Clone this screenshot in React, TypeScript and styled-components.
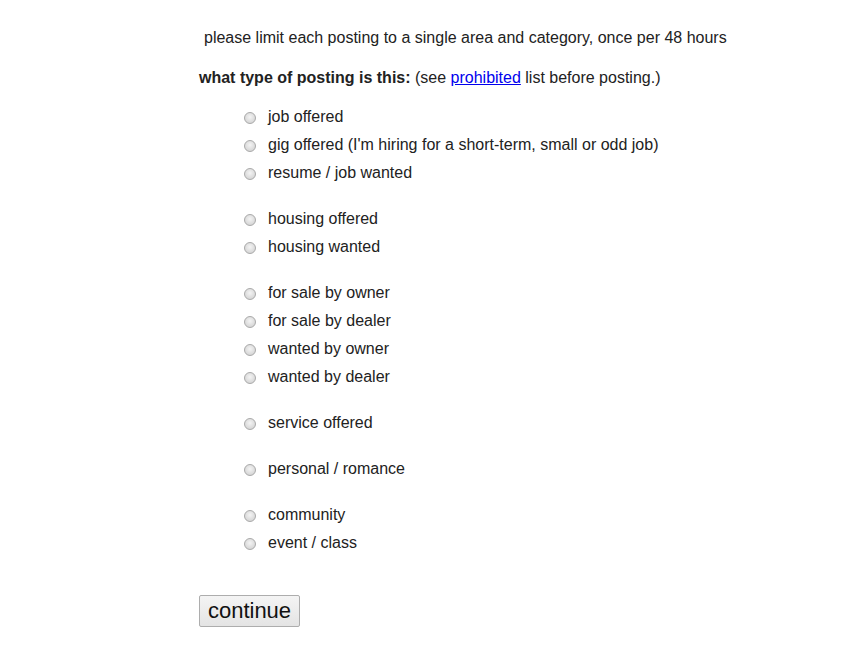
import styled, { createGlobalStyle } from "styled-components"

const GlobalStyle = createGlobalStyle`
    body {
        margin: 0;
        background: #ffffff;
        font-family: "Liberation Sans", Arial, sans-serif;
        color: #222222;
    }
`

const groups: string[][] = [
    ["job offered", "gig offered (I'm hiring for a short-term, small or odd job)", "resume / job wanted"],
    ["housing offered", "housing wanted"],
    ["for sale by owner", "for sale by dealer", "wanted by owner", "wanted by dealer"],
    ["service offered"],
    ["personal / romance"],
    ["community", "event / class"],
]

const Page = styled.div`
    padding: 28px 0 40px 199px;
    font-size: 16px;
`

const Notice = styled.div`
    line-height: 20px;
    padding-left: 5px;
`

const Question = styled.div`
    line-height: 20px;
    margin-top: 20px;

    b {
        font-weight: bold;
    }
    a {
        color: #0000ee;
        text-decoration: underline;
    }
`

const Options = styled.div`
    margin-top: 15px;
    padding-left: 45px;
`

const Group = styled.div`
    margin-bottom: 18px;
`

const Row = styled.label`
    display: flex;
    align-items: center;
    gap: 12px;
    height: 28px;
    line-height: 20px;
`

const Radio = styled.input`
    appearance: none;
    margin: 2px 0 0 0;
    width: 12px;
    height: 12px;
    border-radius: 50%;
    border: 1px solid #a9a9a9;
    background: radial-gradient(circle at 50% 40%, #f4f4f4 0%, #dcdcdc 60%, #cfcfcf 100%);
    box-sizing: border-box;
`

const Continue = styled.button`
    margin-top: 20px;
    height: 32px;
    width: 101px;
    padding: 0;
    font-family: "Liberation Sans", Arial, sans-serif;
    font-size: 22px;
    color: #111111;
    background: linear-gradient(#f4f4f4, #e4e4e4);
    border: 1px solid #adadad;
    border-radius: 2px;
`

export default function App() {
    return (
        <>
            <GlobalStyle />
            <Page>
                <Notice>please limit each posting to a single area and category, once per 48 hours</Notice>
                <Question>
                    <b>what type of posting is this:</b> (see <a href="#">prohibited</a> list before posting.)
                </Question>
                <Options>
                    {groups.map((g, i) => (
                        <Group key={i}>
                            {g.map((label) => (
                                <Row key={label}>
                                    <Radio type="radio" name="type" />
                                    <span>{label}</span>
                                </Row>
                            ))}
                        </Group>
                    ))}
                </Options>
                <Continue>continue</Continue>
            </Page>
        </>
    )
}
